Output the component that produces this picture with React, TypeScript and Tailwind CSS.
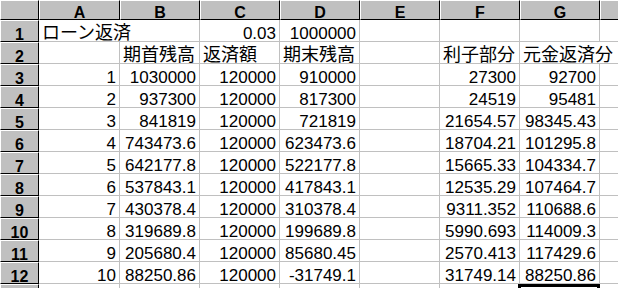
import clsx from 'clsx';

type Cell = { v: string; jp?: boolean; spill?: boolean };

const COLS = ['A', 'B', 'C', 'D', 'E', 'F', 'G', 'H'];
const WIDTHS = ['w-[81px]', 'w-[80px]', 'w-[80px]', 'w-[80px]', 'w-[80px]', 'w-[80px]', 'w-[80px]', 'w-[80px]'];

const n = (v: string): Cell => ({ v });
const jp = (v: string, spill = false): Cell => ({ v, jp: true, spill });
const _ = n('');

const ROWS: Cell[][] = [
  [jp('ローン返済', true), _, n('0.03'), n('1000000'), _, _, _, _],
  [_, jp('期首残高'), jp('返済額'), jp('期末残高'), _, jp('利子部分'), jp('元金返済分', true), _],
  [n('1'), n('1030000'), n('120000'), n('910000'), _, n('27300'), n('92700'), _],
  [n('2'), n('937300'), n('120000'), n('817300'), _, n('24519'), n('95481'), _],
  [n('3'), n('841819'), n('120000'), n('721819'), _, n('21654.57'), n('98345.43'), _],
  [n('4'), n('743473.6'), n('120000'), n('623473.6'), _, n('18704.21'), n('101295.8'), _],
  [n('5'), n('642177.8'), n('120000'), n('522177.8'), _, n('15665.33'), n('104334.7'), _],
  [n('6'), n('537843.1'), n('120000'), n('417843.1'), _, n('12535.29'), n('107464.7'), _],
  [n('7'), n('430378.4'), n('120000'), n('310378.4'), _, n('9311.352'), n('110688.6'), _],
  [n('8'), n('319689.8'), n('120000'), n('199689.8'), _, n('5990.693'), n('114009.3'), _],
  [n('9'), n('205680.4'), n('120000'), n('85680.45'), _, n('2570.413'), n('117429.6'), _],
  [n('10'), n('88250.86'), n('120000'), n('-31749.1'), _, n('31749.14'), n('88250.86'), _],
  [_, _, _, _, _, _, _, _],
];

const headCls =
  'box-border shrink-0 bg-[#c0c0c0] border border-t-white border-l-white border-r-black border-b-black text-center font-bold text-[16px] leading-[17px] text-black';

function BodyCell({ cell, width, selected }: { cell: Cell; width: string; selected?: boolean }) {
  return (
    <div
      className={clsx(
        'relative box-border h-[22px] shrink-0 whitespace-nowrap border-b border-[#c0c0c0]',
        width,
        !cell.spill && 'border-r'
      )}
    >
      {cell.v &&
        (cell.jp ? (
          <div className="relative z-10 pl-[3px] pt-[2px] text-left font-['Noto_Sans_CJK_JP',sans-serif] text-[18px] leading-[18px]">
            {cell.v}
          </div>
        ) : (
          <div className="pr-[3px] pt-[5px] text-right text-[17px] leading-[18px]">{cell.v}</div>
        ))}
      {selected && <div className="absolute -left-[2px] -right-[1px] top-0 z-20 h-[40px] border-[3px] border-black" />}
    </div>
  );
}

export default function App() {
  return (
    <div className="h-[288px] w-[618px] overflow-hidden bg-white font-['Liberation_Sans','Noto_Sans_CJK_JP',sans-serif] text-black">
      {/* column headers */}
      <div className="flex">
        <div className={clsx(headCls, 'h-[20px] w-[39px]')} />
        {COLS.map((c, i) => (
          <div key={c} className={clsx(headCls, 'h-[20px] pt-[3px]', WIDTHS[i])}>
            {c}
          </div>
        ))}
      </div>

      {ROWS.map((row, r) => (
        <div key={r} className="flex">
          <div className={clsx(headCls, 'h-[22px] w-[39px] pt-[5px]')}>{r + 1}</div>
          {row.map((cell, c) => (
            <BodyCell key={c} cell={cell} width={WIDTHS[c]} selected={r === 12 && c === 6} />
          ))}
        </div>
      ))}
    </div>
  );
}
